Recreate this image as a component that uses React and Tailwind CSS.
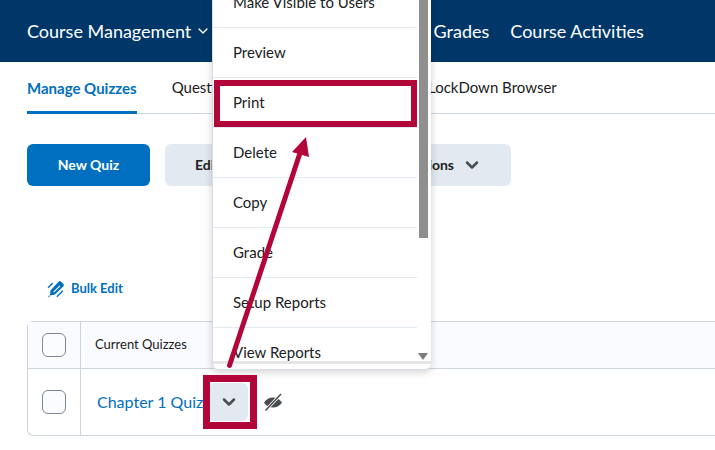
import { ChevronDown } from 'lucide-react';

const menuItems = ['Make Visible to Users', 'Preview', 'Print', 'Delete', 'Copy', 'Grade', 'Setup Reports', 'View Reports'];

const Checkbox = () => <div className="w-6 h-6 rounded-md border border-[#7c8695] bg-[#fbfcff]" />;

const BulkEditIcon = () => (
  <svg viewBox="0 0 18 18" className="w-[18px] h-[18px]" fill="#006fbf">
    <path d="M11.8 1.6a1.5 1.5 0 0 1 2.1 0l2.5 2.5a1.5 1.5 0 0 1 0 2.1L8 14.6l-5.2.9.9-5.3z" />
    <path d="M1 17.2l1-1.6 1.6.4z" />
    <path d="M.6 7.2l4.6-4.6 1 1-4.6 4.6z" />
    <path d="M9.4 16.2l6-6 1 1-6 6z" />
    <path d="M6.2 11.8l6.4-6.4.8.8-6.4 6.4z" fill="#fff" />
  </svg>
);

const HiddenEyeIcon = () => (
  <svg viewBox="0 0 20 20" className="w-5 h-5">
    <path d="M1 10.5C3.2 7.2 6.4 5.4 10 5.4s6.8 1.8 9 5.1c-2.2 3.3-5.4 5-9 5s-6.8-1.7-9-5z" fill="#494c4e" />
    <path d="M2.5 18.5L18 2" stroke="#fff" strokeWidth="3.2" />
    <path d="M2.5 18.5L18 2" stroke="#494c4e" strokeWidth="1.5" />
  </svg>
);

export default function App() {
  return (
    <div className="relative w-full h-[450px] overflow-hidden bg-white text-[#202122] font-['Lato',sans-serif]">
      <nav className="h-[62px] bg-[#003768] text-white text-lg flex items-center pl-[27px] whitespace-nowrap">
        <span>Course Management</span>
        <ChevronDown className="w-4 h-4 ml-1" />
        <span className="ml-[137px]">Content</span>
        <span className="ml-[21px]">Grades</span>
        <span className="ml-[21px]">Course Activities</span>
      </nav>

      <div className="h-[52px] mx-0 ml-[27px] border-b border-[#cdd5dc] flex items-stretch text-[15px] whitespace-nowrap">
        <div className="flex items-center font-bold text-[#006fbf] border-b-[3px] border-[#006fbf] -mb-px pt-[3px]">Manage Quizzes</div>
        <div className="flex items-center ml-[35px]">Question Library</div>
        <div className="flex items-center ml-[146px]">LockDown Browser</div>
      </div>

      <div className="flex mt-[30px] ml-[27px] text-sm font-bold">
        <button className="w-[123px] h-[42px] rounded-md bg-[#006fbf] text-white">New Quiz</button>
        <button className="w-[150px] h-[42px] ml-[15px] rounded-l-md bg-[#e3e9f1] text-left pl-[30px]">Edit Categories</button>
        <button className="w-[196px] h-[42px] rounded-r-md bg-[#e3e9f1] flex items-center justify-end pr-[29px]">
          More Actions
          <ChevronDown className="w-5 h-5 ml-2 text-[#494c4e]" strokeWidth={3} />
        </button>
      </div>

      <div className="flex items-center mt-[93px] ml-[47px] text-[13px] font-bold text-[#006fbf]">
        <BulkEditIcon />
        <span className="ml-[6px]">Bulk Edit</span>
      </div>

      <div className="mt-[22px] ml-[27px] border border-r-0 border-[#cdd5dc] rounded-l-md">
        <div className="flex h-[47px] bg-[#f9fbff] border-b border-[#cdd5dc]">
          <div className="w-[53px] flex items-center justify-center border-r border-[#cdd5dc]"><Checkbox /></div>
          <div className="flex items-center pl-[14px] text-[13px]">Current Quizzes</div>
        </div>
        <div className="flex h-[66px]">
          <div className="w-[53px] flex items-center justify-center border-r border-[#cdd5dc]"><Checkbox /></div>
          <div className="flex items-center pl-4 text-base text-[#006fbf] whitespace-nowrap">
            <span>Chapter 1 Quiz</span>
            <div className="ml-[6px] w-[39px] h-[38px] rounded-md bg-[#e3e9f1] flex items-center justify-center">
              <ChevronDown className="w-5 h-5 text-[#494c4e]" strokeWidth={3} />
            </div>
            <div className="ml-[15px]"><HiddenEyeIcon /></div>
          </div>
        </div>
      </div>

      {/* open context menu */}
      <div className="absolute left-[212px] top-0 w-[219px] h-[370px] overflow-hidden bg-white rounded-b-md border-l border-b border-[#d8dee6] shadow-[0_2px_8px_rgba(0,0,0,0.18)] text-[15px] text-[#202122]">
        <div className="-mt-[22px] w-[204px]">
          {menuItems.map((item) => (
            <div key={item} className="h-[50px] pl-5 flex items-center border-b border-[#e3e9f1] whitespace-nowrap">{item}</div>
          ))}
        </div>
        <div className="absolute right-[3px] top-0 w-[9px] h-[238px] bg-[#8f8f8f]" />
        <div className="absolute left-0 right-0 bottom-[5px] h-[3px] bg-[#e6e6e6]" />
        <div className="absolute right-[3px] bottom-[9px] w-0 h-0 border-x-[5px] border-x-transparent border-t-[7px] border-t-[#7d7d7d]" />
      </div>

      {/* annotations */}
      <div className="absolute left-[214px] top-[80px] w-[203px] h-[47px] border-[6px] border-[#b2063b]" />
      <div className="absolute left-[203px] top-[375px] w-[54px] h-[54px] border-[7px] border-[#b2063b]" />
      <svg className="absolute left-0 top-0 w-[715px] h-[450px] pointer-events-none" viewBox="0 0 715 450">
        <path d="M229.5 365.5L301 150" stroke="#b2063b" strokeWidth="5" strokeLinecap="round" fill="none" />
        <path d="M306 137L292 152L309 157z" fill="#b2063b" />
      </svg>
    </div>
  );
}
